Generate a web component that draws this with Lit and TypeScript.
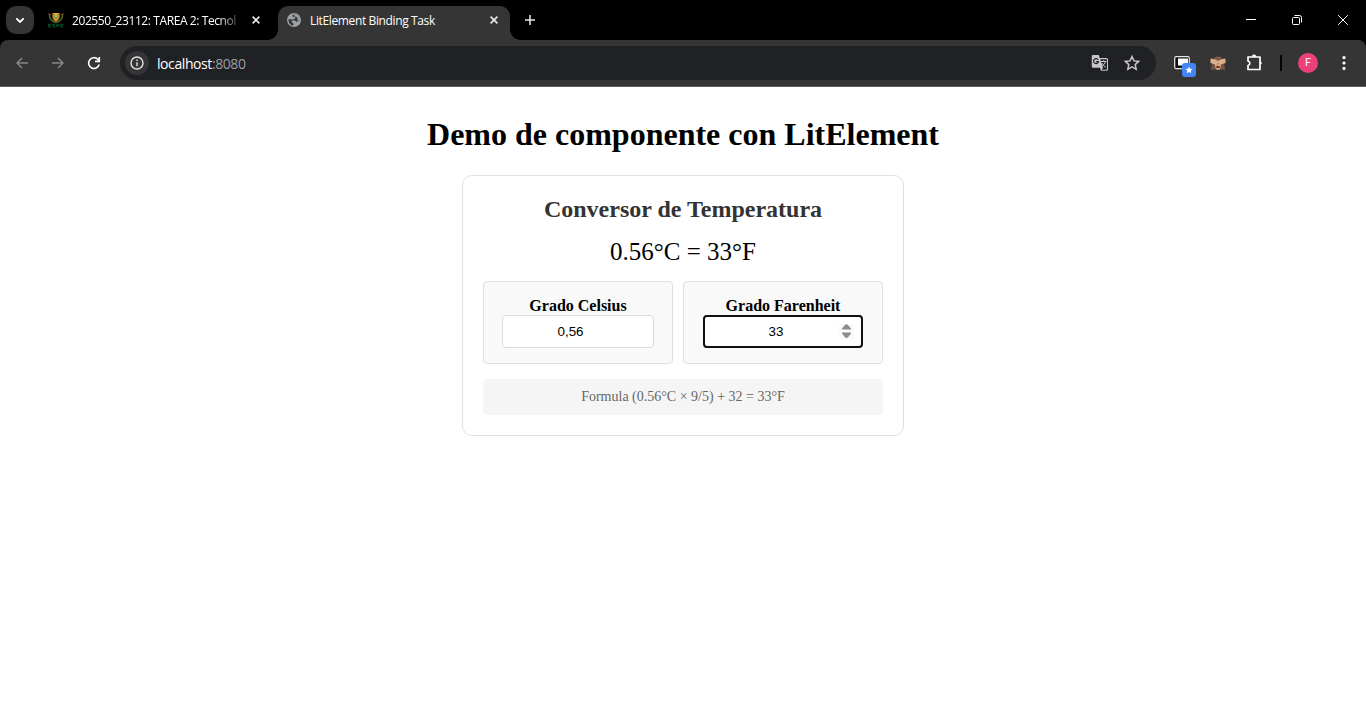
import { LitElement, html, css, svg } from "lit";
import { customElement, property } from "lit/decorators.js";

@customElement("browser-chrome")
class BrowserChrome extends LitElement {
  static styles = css`
    :host { display: block; font-family: "Open Sans", "Noto Sans", sans-serif; color: #fff; background: #000; }
    svg { display: block; flex: none; }
    .strip { display: flex; height: 40px; align-items: center; }
    .search { display: grid; place-items: center; width: 28px; height: 28px; margin-left: 6px; border-radius: 10px; background: #353535; }
    .tab { display: flex; align-items: center; box-sizing: border-box; font-size: 12px; line-height: 16px; }
    .idle { width: 244px; padding: 0 17px 0 14px; }
    .title { white-space: nowrap; letter-spacing: -0.37px; padding-top: 1px; }
    .idle .title { width: 167px; margin-left: 8px; letter-spacing: -0.41px; -webkit-mask-image: linear-gradient(to right, #000 146px, transparent 172px); mask-image: linear-gradient(to right, #000 146px, transparent 172px); }
    .idle .close { margin-left: 13px; }
    .active { position: relative; align-self: flex-end; width: 232px; height: 34px; padding: 0 11px 6px 9px; background: #353535; border-radius: 10px 10px 0 0; }
    .active::before, .active::after { content: ""; position: absolute; bottom: 0; width: 10px; height: 10px; }
    .active::before { left: -10px; background: radial-gradient(circle at 0 0, transparent 9.5px, #353535 10px); }
    .active::after { right: -10px; background: radial-gradient(circle at 100% 0, transparent 9.5px, #353535 10px); }
    .active .title { margin-left: 9px; flex: 1; }
    .plus { margin-left: 14px; }
    .win { display: flex; margin-left: auto; }
    .win div { display: grid; place-items: center; width: 46px; height: 40px; }
    .bar { display: flex; align-items: center; box-sizing: border-box; height: 47px; border-bottom: 1px solid #5b5b5b; background: #353535; border-radius: 8px 8px 0 0; }
    .nav { display: flex; width: 120px; }
    .nav div { display: grid; place-items: center; width: 36px; height: 36px; }
    .nav div:first-child { margin-left: 4px; }
    .omni { display: flex; align-items: center; box-sizing: border-box; width: 1036px; height: 34px; padding: 0 15px 0 5px; border-radius: 17px; background: #202124; }
    .info { display: grid; place-items: center; width: 24px; height: 24px; border-radius: 50%; background: #353535; }
    .url { flex: 1; margin-left: 8px; padding-top: 1px; font-size: 14px; line-height: 20px; letter-spacing: -0.42px; }
    .port { color: #9a9ea3; }
    .star { margin-left: 14px; }
    .ext { display: flex; align-items: center; margin-left: 17px; }
    .monkey { margin-left: 13px; }
    .puzzle { margin-left: 20px; }
    .sep { width: 2px; height: 16px; margin-left: 16px; background: #050505; }
    .avatar { display: grid; place-items: center; width: 20px; height: 20px; margin-left: 16px; border-radius: 50%; background: #ec407a; font: 11px/20px Roboto, sans-serif; }
    .dots { margin-left: 18px; }
  `;

  private close() {
    return html`<svg class="close" width="10" height="10" viewBox="0 0 10 10" stroke="#e8e8e8" stroke-width="1.6"><path d="M1.6 1.6l6.8 6.8M8.4 1.6L1.6 8.4" /></svg>`;
  }

  render() {
    return html`
      <div class="strip">
        <div class="search"><svg width="10" height="10" viewBox="0 0 10 10" fill="none" stroke="#fff" stroke-width="1.8"><path d="M1.3 3.3L5 7l3.7-3.7" /></svg></div>
        <div class="tab idle">
          <svg width="16" height="16" viewBox="0 0 16 16">
            <path d="M1.2 2.5C1.5 7 4 9.5 8 10.5 12 9.500 14.500 7 14.800 2.5" fill="none" stroke="#53712a" stroke-width="1.4" />
            <path d="M.5 1.500l3 1.500M15.500 1.500l-3 1.500" stroke="#8a6527" />
            <path d="M4.500 1h7v4.500Q11 8.500 8 9.800 5 8.500 4.500 5.500z" fill="#e68a28" />
            <path d="M6.300 2.500h3.400v3L8 8 6.300 5.500z" fill="#59a765" /><path d="M7.500 1h1v4h-1z" fill="#f5e33e" />
            <path d="M.5 12.500h2.700M.5 12.500v2.500h2.700M.5 13.800h2M7 12.500H4.700v1.300H7V15H4.500M8.700 15.300v-2.800h2.300v1.500H8.700M15.500 12.500h-2.700V15h2.700M12.800 13.800h2" stroke="#07542d" stroke-width=".9" fill="none" />
          </svg>
          <span class="title">202550_23112: TAREA 2: Tecnol</span>
          ${this.close()}
        </div>
        <div class="tab active">
          <svg width="14" height="14" viewBox="0 0 14 14">
            <circle cx="7" cy="7" r="7" fill="#9aa0a6" />
            <path d="M7.200 1.400l-1.700.9.3 1.500 2.400.4-.3 1.800-2.600.5-3.800-.3C1.400 9.800 3.500 12.200 6.300 12.600V10.500L4.800 9.200 4.700 7.500h3.500l1.200 1.200 1.200-.2 1.800-1.800C12.500 4 10.400 1.600 7.200 1.400z" fill="#353535" />
            <path d="M7.600 1.500L7 3.200l3 1.100.8 1.700-1 1.200h2.900C12.800 4 10.500 1.500 7.600 1.500z" fill="#9aa0a6" />
          </svg>
          <span class="title">LitElement Binding Task</span>
          ${this.close()}
        </div>
        <svg class="plus" width="12" height="12" viewBox="0 0 12 12" stroke="#e8e8e8" stroke-width="1.5"><path d="M6 1v10M1 6h10" /></svg>
        <div class="win">
          <div><svg width="10" height="10" viewBox="0 0 10 10"><path d="M0 4h10v1H0z" fill="#fff" /></svg></div>
          <div><svg width="10" height="10" viewBox="0 0 10 10" fill="none" stroke="#fff"><rect x=".5" y="2.500" width="7" height="7" rx="1" /><path d="M2.500.5H7.500a2 2 0 0 1 2 2v5" /></svg></div>
          <div><svg width="10" height="10" viewBox="0 0 10 10" stroke="#fff"><path d="M.2.2l9.600 9.600M9.800.2L.2 9.800" /></svg></div>
        </div>
      </div>
      <div class="bar">
        <div class="nav">
          ${[svg`<path d="M12 6H1M6 1L1 6l5 5" />`, svg`<path d="M0 6h11M6 1l5 5-5 5" />`].map(
            (p) => html`<div><svg width="12" height="12" viewBox="0 0 12 12" fill="none" stroke="#858585" stroke-width="1.500">${p}</svg></div>`
          )}
          <div><svg width="14" height="14" viewBox="0 0 14 14" fill="none" stroke="#fff" stroke-width="1.600"><path d="M12.200 8.600A5.400 5.400 0 1 1 10.800 3.200L12.300 4.800M12.300 1v4.400H8" /></svg></div>
        </div>
        <div class="omni">
          <div class="info"><svg width="14" height="14" viewBox="0 0 14 14" fill="none" stroke="#e3e3e3" stroke-width="1.400"><circle cx="7" cy="7" r="6" /><path d="M7 6.200v4M7 3.500v1.500" /></svg></div>
          <span class="url">localhost<span class="port">:8080</span></span>
          <svg width="18" height="18" viewBox="0 0 18 18">
            <path d="M2 1h5.800l.9 3h6.800q1.500 0 1.500 1.500v9.800q0 1.500-1.500 1.500H10l-1-3H2.200Q.8 13.800.8 12.400V2.400Q.8 1 2 1z" fill="#c7c7c7" />
            <path d="M9.200 5.200h6q.8 0 .8.800v8.800q0 .9-.9.900H10.800l1.200-1.900z" fill="#202124" />
            <path d="M7.200 5.700A2.500 2.500 0 1 0 7.500 7.700H5.200" fill="none" stroke="#202124" stroke-width="1.200" />
            <path d="M9.800 7.500h5.700M12.700 6.300v1.200M14.500 7.700q-1 3-3.200 4.300M10.800 9q1.300 2.500 3.900 4.200" fill="none" stroke="#c7c7c7" />
          </svg>
          <svg class="star" width="18" height="18" viewBox="0 0 18 18" fill="none" stroke="#c7c7c7" stroke-width="1.500"><path d="M9 2.600l2 4.300 4.700.5-3.500 3.200 1 4.700L9 12.900l-4.200 2.400 1-4.700-3.500-3.200 4.700-.5z" /></svg>
        </div>
        <div class="ext">
          <svg width="24" height="24" viewBox="0 0 24 24" overflow="visible">
            <rect x="1.700" y="5.700" width="14.600" height="12" rx="1.500" fill="#111" stroke="#e8e8e8" stroke-width="1.200" />
            <path d="M5 7.500h10v7H5z" fill="#fff" />
            <rect x="9" y="12" width="14" height="14" rx="3" fill="#4285f4" />
            <path d="M16 15.500l1.100 2.300 2.500.3-1.900 1.700.5 2.500-2.200-1.200-2.200 1.200.5-2.500-1.900-1.700 2.500-.3z" fill="#fff" />
          </svg>
          <svg class="monkey" width="16" height="16" viewBox="0 0 16 16">
            <path d="M3 6Q3.500 1.500 8 1.500T13 6v7H3z" fill="#805b49" />
            <path d="M5 9h6v3.500Q10.500 15 8 15t-3-2.500z" fill="#d2a078" />
            <path d="M.5 4.500q0-1 1-1l5 1.500L8 6.300 9.500 5l5-1.500q1 0 1 1V8l-5 1.700L8 8.300 5.500 9.700.5 8z" fill="#deb08a" />
            <ellipse cx="8" cy="12" rx="2.500" ry="1.100" fill="#6c3532" /><path d="M1.800 9l3 .7.4 5H.8zM14.200 9l-3 .7-.4 5h4.400z" fill="#765243" />
          </svg>
          <svg class="puzzle" width="18" height="18" viewBox="0 0 18 18" fill="none" stroke="#fff" stroke-width="1.700" stroke-linejoin="round">
            <path d="M2 3h12v12.500H2v-4a2.300 2.300 0 0 0 0-4.500z" /><path d="M6 2.500a2 1.700 0 0 1 4 0zM14.500 7.500a1.700 1.700 0 0 1 0 3z" fill="#fff" stroke-width=".6" />
          </svg>
          <div class="sep"></div>
          <div class="avatar">F</div>
          <svg class="dots" width="16" height="16" viewBox="0 0 16 16" fill="#fff"><circle cx="8" cy="2.600" r="1.600" /><circle cx="8" cy="8" r="1.600" /><circle cx="8" cy="13.400" r="1.600" /></svg>
        </div>
      </div>`;
  }
}

@customElement("temperature-converter")
class TemperatureConverter extends LitElement {
  @property({ type: Number }) celsius = 0.56;
  @property({ type: Number }) fahrenheit = 33;

  static styles = css`
    :host { display: block; box-sizing: border-box; width: 442px; height: 261px; margin: 0 auto; padding: 20px; border: 1px solid #e0e0e0; border-radius: 10px; text-align: center; font-family: "Liberation Serif", serif; }
    h2 { margin: 0; font-size: 24px; line-height: 27px; color: #333; }
    .result { margin: 14px 0 15px; font-size: 25px; line-height: 29px; }
    .fields { display: grid; grid-template-columns: 190px 200px; gap: 10px; }
    .field { display: flex; flex-direction: column; align-items: center; box-sizing: border-box; height: 83px; padding-top: 15px; border: 1px solid #e0e0e0; border-radius: 4px; background: #f9f9f9; }
    label { font-size: 16px; line-height: 18px; font-weight: bold; }
    .input { display: flex; align-items: center; box-sizing: border-box; width: 152px; height: 33px; padding: 0 8px; border: 1px solid #ddd; border-radius: 4px; background: #fff; font: 13.333px/15px "Liberation Sans", Arial, sans-serif; }
    .input.focus { width: 160px; padding: 0 7px 0 8px; border: 2px solid #101010; }
    .value { flex: 1; }
    .spin { display: grid; place-items: center; width: 15px; height: 15px; }
    .focus .spin { background: #fafafa; }
    .formula { height: 36px; margin-top: 15px; border-radius: 4px; background: #f5f5f5; color: #666; font-size: 14px; line-height: 35px; }
  `;

  render() {
    const { celsius: c, fahrenheit: f } = this;
    return html`
      <h2>Conversor de Temperatura</h2>
      <div class="result">${c}°C = ${f}°F</div>
      <div class="fields">
        <div class="field"><label>Grado Celsius</label>
          <div class="input"><span class="value">${String(c).replace(".", ",")}</span><span class="spin"></span></div>
        </div>
        <div class="field"><label>Grado Farenheit</label>
          <div class="input focus"><span class="value">${f}</span><span class="spin"><svg width="9" height="15" viewBox="0 0 9 15" fill="#8b8b8b"><path d="M0 5.500V4.500L3 1Q4.500-.300 6 1L9 4.500v1zM0 8.500v1l3 3.700q1.500 1.500 3 0L9 9.500v-1z" /></svg></span></div>
        </div>
      </div>
      <div class="formula">Formula (${c}°C × 9/5) + 32 = ${f}°F</div>`;
  }
}

@customElement("app-root")
class AppRoot extends LitElement {
  static styles = css`
    :host { display: block; height: 720px; overflow: hidden; background: #fff; color: #000; }
    h1 { margin: 29px 0 22px; font: bold 32px/37px "Liberation Serif", serif; text-align: center; }
  `;

  render() {
    return html`<browser-chrome></browser-chrome>
      <h1>Demo de componente con LitElement</h1>
      <temperature-converter></temperature-converter>`;
  }
}
